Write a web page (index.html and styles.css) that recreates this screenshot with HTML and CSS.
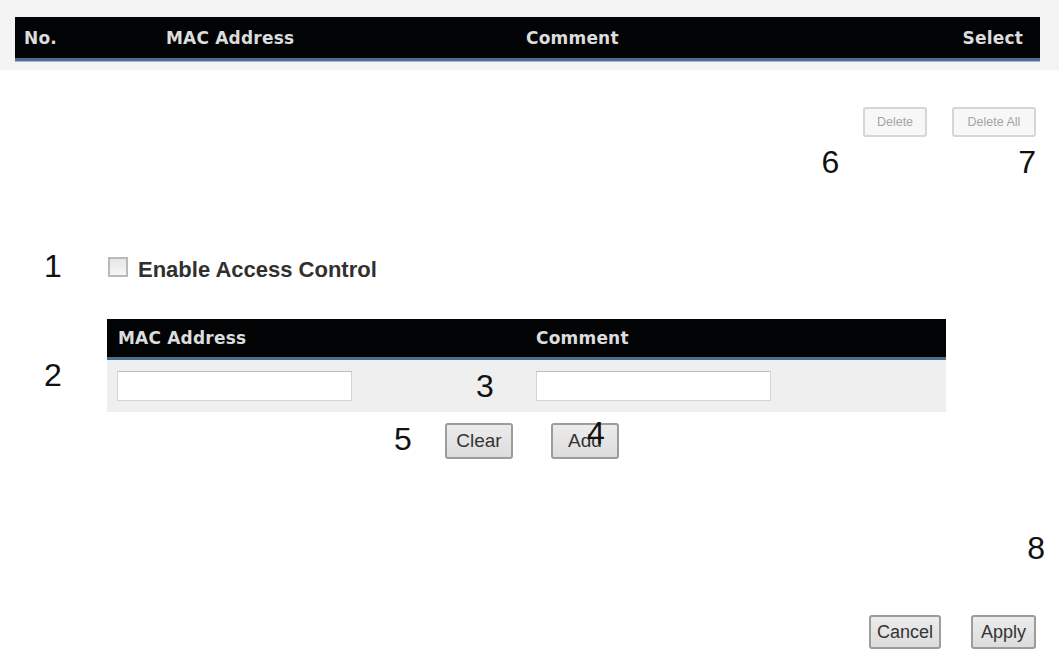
FILE: index.html
```html
<!DOCTYPE html>
<html>
<head>
<meta charset="utf-8">
<link rel="stylesheet" href="styles.css">
</head>
<body>
<div class="page">
  <div class="band">
    <div class="thead top-head">
      <span class="c-no">No.</span>
      <span class="c-mac">MAC Address</span>
      <span class="c-com">Comment</span>
      <span class="c-sel">Select</span>
    </div>
  </div>

  <div class="actions">
    <button class="btn btn-off">Delete</button>
    <button class="btn btn-off">Delete All</button>
  </div>
  <div class="marks">
    <span class="num">6</span>
    <span class="num">7</span>
  </div>

  <div class="enable">
    <span class="num n1">1</span>
    <span class="cb"></span>
    <span class="enable-label">Enable Access Control</span>
  </div>

  <div class="entry">
    <span class="num n2">2</span>
    <div class="tbl">
      <div class="thead entry-head">
        <span>MAC Address</span>
        <span>Comment</span>
      </div>
      <div class="entry-row">
        <div class="cell">
          <span class="field"></span>
          <span class="num n3">3</span>
        </div>
        <div class="cell">
          <span class="field"></span>
        </div>
      </div>
    </div>
  </div>

  <div class="entry-btns">
    <span class="num n5">5</span>
    <button class="btn btn-std">Clear</button>
    <span class="addwrap">
      <button class="btn btn-std btn-add">Add</button>
      <span class="num n4">4</span>
    </span>
  </div>

  <div class="mark8"><span class="num">8</span></div>

  <div class="footer">
    <button class="btn btn-std btn-cancel">Cancel</button>
    <button class="btn btn-std btn-apply">Apply</button>
  </div>
</div>
</body>
</html>
```

FILE: styles.css
```css
html, body {
  margin: 0;
  padding: 0;
  background: #ffffff;
}
.page {
  width: 1059px;
  height: 662px;
  overflow: hidden;
  font-family: "Liberation Sans", Arial, sans-serif;
  color: #000;
}
.band {
  background: #f3f3f3;
  padding: 17px 19px 9px 15px;
}
.thead {
  background: #020305;
  border-bottom: 3px solid #4d6d8f;
  box-shadow: 0 1px 0 #a9b9c9;
  color: #dcdcdc;
  font-family: "DejaVu Sans", Verdana, sans-serif;
  font-weight: bold;
  font-size: 17px;
  letter-spacing: 0.2px;
  display: grid;
  align-items: center;
}
.top-head {
  height: 41px;
  grid-template-columns: 142px 360px 1fr auto;
  padding: 0 17px 0 9px;
}
.c-sel { text-align: right; }

.actions {
  display: flex;
  justify-content: flex-end;
  gap: 25px;
  padding-right: 23px;
  margin-top: 37px;
}
.btn {
  font-family: "Liberation Sans", Arial, sans-serif;
  border-radius: 3px;
  padding: 0;
  cursor: default;
}
.btn-off {
  height: 30px;
  font-size: 12.5px;
  color: #a4a4a4;
  background: #f7f7f7;
  border: 2px solid #d6d6d6;
}
.btn-off:first-child { width: 64px; }
.btn-off:last-child { width: 84px; }

.num {
  font-family: "Liberation Sans", Arial, sans-serif;
  font-size: 32px;
  line-height: 32px;
  color: #111;
}
.marks {
  display: flex;
  justify-content: flex-end;
  gap: 179px;
  padding-right: 23px;
  margin-top: 9px;
}

.enable {
  display: flex;
  align-items: center;
  margin-top: 70px;
  height: 36px;
}
.n1 { margin-left: 44px; width: 64px; }
.cb {
  width: 16px;
  height: 16px;
  border: 2px solid #b9b9b9;
  background: linear-gradient(#e6e6e6, #f6f6f6);
  margin-right: 10px;
  margin-top: 2px;
}
.enable-label {
  font-weight: bold;
  font-size: 22px;
  color: #303030;
  margin-top: 8px;
}

.entry {
  display: flex;
  align-items: center;
  margin-top: 35px;
}
.n2 { margin-left: 44px; width: 63px; margin-top: 18px; }
.tbl { width: 839px; }
.entry-head {
  height: 38px;
  grid-template-columns: 418px 1fr;
  padding-left: 11px;
  font-size: 17px;
}
.entry-row {
  background: #efefef;
  height: 52px;
  display: grid;
  grid-template-columns: 429px 1fr;
  align-items: center;
}
.cell {
  display: flex;
  align-items: center;
  padding-left: 10px;
}
.cell:last-child { padding-left: 0; }
.field {
  width: 233px;
  height: 28px;
  background: #fff;
  border: 1px solid #d4d4d4;
  border-top-color: #bdbdbd;
}
.n3 { margin-left: 124px; margin-top: 0px; }

.entry-btns {
  display: flex;
  align-items: center;
  margin-top: 11px;
  height: 36px;
}
.n5 { margin-left: 394px; width: 51px; margin-top: -4px; }
.btn-std {
  height: 36px;
  font-size: 19px;
  color: #333;
  background: linear-gradient(#ececec, #dcdcdc);
  border: 2px solid #9c9c9c;
}
.entry-btns .btn-std:first-of-type { width: 68px; }
.addwrap {
  position: relative;
  margin-left: 38px;
  display: inline-flex;
}
.btn-add { width: 56px; }
.n4 {
  position: absolute;
  left: 36px;
  top: -6px;
}

.mark8 {
  display: flex;
  justify-content: flex-end;
  padding-right: 14px;
  margin-top: 73px;
}
.footer {
  display: flex;
  justify-content: flex-end;
  gap: 30px;
  padding-right: 23px;
  margin-top: 51px;
}
.btn-cancel { width: 72px; height: 34px; font-size: 18px; }
.btn-apply { width: 65px; height: 34px; font-size: 18px; }
```
